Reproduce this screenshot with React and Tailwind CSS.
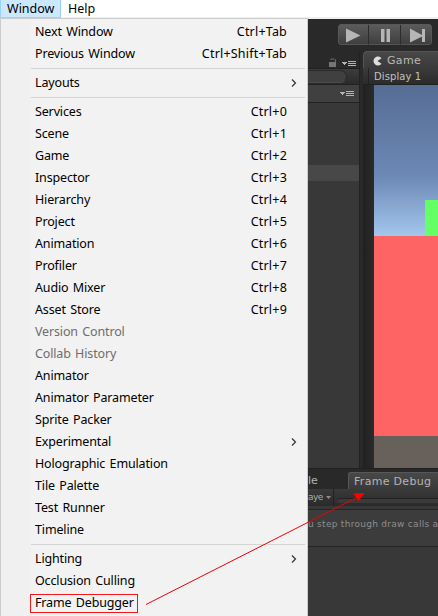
const SEP = "sep";

const items = [
  { label: "Next Window", keys: "Ctrl+Tab" },
  { label: "Previous Window", keys: "Ctrl+Shift+Tab" },
  SEP,
  { label: "Layouts", sub: true },
  SEP,
  { label: "Services", keys: "Ctrl+0" },
  { label: "Scene", keys: "Ctrl+1" },
  { label: "Game", keys: "Ctrl+2" },
  { label: "Inspector", keys: "Ctrl+3" },
  { label: "Hierarchy", keys: "Ctrl+4" },
  { label: "Project", keys: "Ctrl+5" },
  { label: "Animation", keys: "Ctrl+6" },
  { label: "Profiler", keys: "Ctrl+7" },
  { label: "Audio Mixer", keys: "Ctrl+8" },
  { label: "Asset Store", keys: "Ctrl+9" },
  { label: "Version Control", off: true },
  { label: "Collab History", off: true },
  { label: "Animator" },
  { label: "Animator Parameter" },
  { label: "Sprite Packer" },
  { label: "Experimental", sub: true },
  { label: "Holographic Emulation" },
  { label: "Tile Palette" },
  { label: "Test Runner" },
  { label: "Timeline" },
  SEP,
  { label: "Lighting", sub: true },
  { label: "Occlusion Culling" },
  { label: "Frame Debugger", boxed: true },
];

function MenuRow({ item }) {
  if (item === SEP) {
    return (
      <div className="flex h-[7px] items-center pl-[30px] pr-[2px]">
        <div className="h-px w-full bg-[#d4d4d4]" />
      </div>
    );
  }
  return (
    <div className={`flex h-[22px] items-center pl-[29px] ${item.off ? "text-[#6d6d6d]" : "text-black"}`}>
      <span
        className={`flex h-[19px] items-center whitespace-nowrap border pl-1 pr-[3px] tracking-[-0.15px] [word-spacing:1.3px] ${item.boxed ? "w-[108px] border-[#f01818]" : "border-transparent"}`}
      >
        {item.label}
      </span>
      <span className="flex-1" />
      {item.keys && <span className="mr-[20px] tracking-[.2px]">{item.keys}</span>}
      {item.sub && (
        <svg className="mr-[10px]" width="6" height="8" viewBox="0 0 6 8" fill="none" stroke="#333" strokeWidth="1.2">
          <path d="M1 .5 4.5 4 1 7.5" />
        </svg>
      )}
    </div>
  );
}

function Options() {
  return (
    <svg width="15" height="6" viewBox="0 0 15 6" fill="#b4b4b4" shapeRendering="crispEdges">
      <path d="M0 1h5v1H4v1H3v1H2V3H1V2H0z" />
      <path d="M6 0h8v1H6zM6 2h8v1H6zM6 4h8v1H6z" />
    </svg>
  );
}

function PlayControls() {
  return (
    <svg width="94" height="22" viewBox="0 0 94 22">
      <defs>
        <linearGradient id="btn" x1="0" y1="0" x2="0" y2="1">
          <stop offset="0" stopColor="#5c5c5c" />
          <stop offset="1" stopColor="#3e3e3e" />
        </linearGradient>
      </defs>
      <rect x=".5" y=".5" width="93" height="20" rx="2.5" fill="url(#btn)" stroke="#626262" strokeOpacity=".7" />
      <path d="M30.5 1v19.500M62.500 1v19.500" stroke="#2c2c2c" />
      <path d="M8 4.500 22.500 11.500 8 18.500z" fill="#b6b6b6" />
      <path d="M43 5h3.500v13H43zM48.500 5H52v13h-3.500z" fill="#b6b6b6" />
      <path d="M72 4.500 84 11V5h3v13h-3v-5.500L72 18.500z" fill="#b6b6b6" />
    </svg>
  );
}

function SidePanel() {
  return (
    <div className="flex w-[52px] shrink-0 flex-col border-r border-[#222] bg-[#383838]">
      <div className="flex h-[17px] items-end bg-[#292929] pb-px pl-[21px]">
        <svg width="8" height="9" viewBox="0 0 8 9">
          <path d="M2 2V1h3.500l1 1v2" fill="none" stroke="#6b6b6b" />
          <path d="M0 4h7v5H0z" fill="#757575" />
        </svg>
        <span className="ml-[5px]">
          <Options />
        </span>
      </div>
      <div className="h-4 border-t border-[#202020] bg-linear-to-b from-[#3c3c3c] to-[#2b2b2b]">
        <div className="mt-px mr-3 h-[13px] rounded-r-full border border-l-0 border-[#2a2a2a] border-b-[#4a4a4a] bg-[#404040]" />
      </div>
      <div className="flex h-[19px] items-center border-t border-b border-[#222] bg-[#404040] pl-8">
        <Options />
      </div>
      <div className="mt-[62px] h-4 bg-[#484848]" />
    </div>
  );
}

function GamePanel() {
  return (
    <div className="flex min-w-0 flex-1 flex-col bg-[#242424]">
      <div className="flex h-[17px] items-center rounded-tl-[4px] border-t border-l border-[#565656] bg-linear-to-b from-[#484848] to-[#3a3a3a] pl-[9px] pt-px text-[11px] tracking-[.35px] text-[#b8b8b8]">
        <svg className="mr-[5px]" width="9" height="10" viewBox="0 0 9 10">
          <path d="M8.500 2.200A4.500 4.500 0 1 0 8.500 7.800L4.500 5z" fill="#dedede" />
        </svg>
        <span className="pt-[2px]">Game</span>
      </div>
      <div className="flex h-[17px] items-center border-b border-[#202020] bg-linear-to-b from-[#3b3b3b] to-[#2b2b2b] pl-[5px]">
        <div className="h-full w-px bg-[#222]" />
        <span className="pl-[5px] pt-px text-[10px] tracking-[.1px] text-[#c2c2c2]">Display 1</span>
      </div>
      <div className="flex flex-1 flex-col bg-linear-to-r from-[#202020] to-[#2b2b2b] to-[11px] pl-[11px]">
        <div className="flex h-[151px] items-end justify-end bg-linear-to-b from-[#566d94] via-[#6c88b5] via-60% to-[#a4c7ed]">
          <div className="h-9 w-[13px] bg-[#64ff64]" />
        </div>
        <div className="h-[200px] bg-[#ff6464]" />
        <div className="flex-1 bg-[#68605a]" />
      </div>
    </div>
  );
}

function DebuggerPanel() {
  return (
    <div className="flex flex-1 flex-col whitespace-nowrap border-t border-[#202020] bg-[#383838]">
      <div className="flex h-5 items-end bg-[#292929] text-[11px] text-[#b4b4b4]">
        <div className="h-[17px] w-10 leading-[18px]">le</div>
        <div className="h-[17px] flex-1 rounded-tl-[3px] border-t border-l border-[#585858] bg-linear-to-b from-[#484848] to-[#3a3a3a] pl-[5px] leading-[17px] tracking-[.3px]">
          Frame Debug
        </div>
      </div>
      <div className="flex h-[17px] items-center bg-linear-to-b from-[#3a3a3a] to-[#2a2a2a] text-[9px] text-[#acacac]">
        <div className="flex h-full w-[26px] items-center border-r border-[#222]">
          <span className="w-[15px] tracking-[-0.6px]">aye</span>
          <svg className="ml-[3px]" width="5" height="3" viewBox="0 0 5 3">
            <path d="M0 0h5L2.500 3z" fill="#8d8d8d" />
          </svg>
        </div>
        <div className="ml-[3px] mt-[5px] h-[5px] flex-1 rounded-l-full border-t border-[#222] bg-[#3a3a3a]" />
      </div>
      <div className="mt-[3px] flex h-[38px] items-center border-t border-b border-[#242424] bg-[#3c3c3c] pb-[6px] text-[9px] tracking-[.28px] text-[#8e8e8e]">
        u step through draw calls a
      </div>
    </div>
  );
}

export default function App() {
  return (
    <div className="relative flex h-[616px] w-[438px] flex-col overflow-hidden bg-white font-['Noto_Sans',sans-serif] text-[12.5px]">
      <div className="flex h-[18px] border-b border-[#f0f0f0] leading-[18px] text-black">
        <div className="h-[18px] w-[61px] border border-t-0 border-[#99d1ff] bg-[#cce8ff] pl-[6px]">Window</div>
        <div className="pl-[7px]">Help</div>
      </div>
      <div className="flex flex-1">
        <div className="w-[308px] shrink-0 border border-b-0 border-[#ccc] bg-linear-to-r from-[#f0f0f0] from-[30px] to-[#f2f2f2] to-[30px] pt-[2px]">
          {items.map((item, i) => (
            <MenuRow key={i} item={item} />
          ))}
        </div>
        <div className="flex w-[130px] shrink-0 flex-col border-t border-[#f0f0f0] bg-[#292929] font-['DejaVu_Sans',sans-serif]">
          <div className="h-8 pl-[30px] pt-[5px]">
            <PlayControls />
          </div>
          <div className="flex h-[417px]">
            <SidePanel />
            <div className="w-[3px] shrink-0 bg-[#292929]" />
            <GamePanel />
          </div>
          <DebuggerPanel />
        </div>
      </div>
      <svg className="absolute left-0 top-0" width="438" height="616" viewBox="0 0 438 616">
        <path d="M146 604.500 358 497" stroke="#f00000" fill="none" />
        <path d="M364.500 493 353.500 493.500 358.500 501z" fill="#f00" />
      </svg>
    </div>
  );
}
